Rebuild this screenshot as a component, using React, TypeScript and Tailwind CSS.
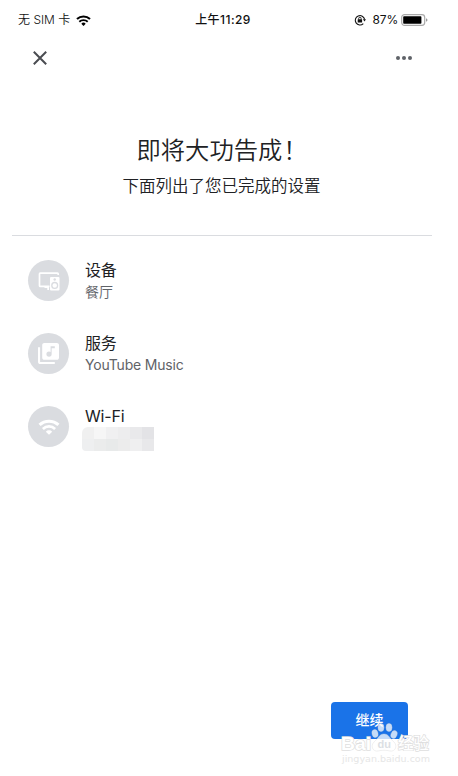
import type { ReactNode } from 'react';

interface RowProps {
  icon: ReactNode;
  title: string;
  children: ReactNode;
}

const mosaic = [
  'bg-[#f0f0f0]', 'bg-[#f6f6f6]', 'bg-[#f0f0f1]', 'bg-[#ededee]', 'bg-[#e9e9eb]', 'bg-[#e3e3e6]',
  'bg-[#eeeff0]', 'bg-[#ebecec]', 'bg-[#e8eaea]', 'bg-[#ececec]', 'bg-[#efeff0]', 'bg-[#e8e8ea]',
];

function WifiGlyph({ className }: { className: string }) {
  return (
    <svg viewBox="0 0 15 11" className={className} fill="none" stroke="currentColor">
      <path d="M1 4.1a9.4 9.4 0 0 1 13 0" strokeWidth="2.1" />
      <path d="M3.3 6.8a6.1 6.1 0 0 1 8.4 0" strokeWidth="1.9" />
      <path d="M7.5 10.9 5.3 8.7a3.1 3.1 0 0 1 4.4 0z" fill="currentColor" stroke="none" />
    </svg>
  );
}

function LockIcon() {
  return (
    <svg viewBox="0 0 12 12" className="h-3 w-3" fill="none" stroke="#111">
      <path d="M9.3 9.6A4.7 4.7 0 1 1 10.6 5.4" strokeWidth="1.1" />
      <path d="M8.9 5.2h3.1l-1.5 2.2z" fill="#111" stroke="none" />
      <rect x="3.7" y="5.2" width="4.4" height="3.4" rx=".4" fill="#111" stroke="none" />
      <path d="M4.7 5.4v-1a1.2 1.2 0 0 1 2.4 0v1" strokeWidth=".9" />
    </svg>
  );
}

function Battery() {
  return (
    <svg viewBox="0 0 27 12" className="h-3 w-[27px]">
      <rect x=".7" y=".6" width="23" height="10.8" rx="2.8" fill="#fff" stroke="#aaa" strokeWidth="1.2" />
      <rect x="2.2" y="2.2" width="18.2" height="7.6" rx=".8" fill="#000" />
      <path d="M25 4.2q1.5.5 1.5 1.8T25 7.8z" fill="#999" />
    </svg>
  );
}

function DeviceIcon() {
  return (
    <svg viewBox="0 0 22 20" className="h-5 w-[22px]" fill="none" stroke="#fff">
      <path d="M20.2 4V2.900q0-.7-.7-.7H2.200q-.7 0-.7.7v11.800q0 .7.7.7H11.500" strokeWidth="1.700" />
      <path d="M6.500 15h4.500v4H9.300v-2H6.500z" fill="#fff" stroke="none" />
      <rect x="12" y="6" width="9.500" height="13.500" rx="1" fill="#fff" stroke="none" />
      <circle cx="16.700" cy="8.500" r="1.200" fill="#dadce0" stroke="none" />
      <circle cx="16.700" cy="14.400" r="2.900" stroke="#dadce0" strokeWidth="1.300" />
    </svg>
  );
}

function MusicIcon() {
  return (
    <svg viewBox="2 2 20 20" className="h-[21px] w-[21px]" fill="#fff">
      <path d="M20 2H8c-1.100 0-2 .9-2 2v12c0 1.100.9 2 2 2h12c1.100 0 2-.9 2-2V4c0-1.100-.9-2-2-2zm-2 5h-3v5.500a2.500 2.500 0 0 1-2.500 2.500 2.500 2.500 0 0 1 0-5c.57 0 1.080.19 1.500.51V5h4v2zM4 6H2v14c0 1.100.9 2 2 2h14v-2H4V6z" />
    </svg>
  );
}

function Row({ icon, title, children }: RowProps) {
  return (
    <li className="flex h-[73px] gap-[17px]">
      <span className="mt-px flex h-[41px] w-[41px] shrink-0 items-center justify-center rounded-full bg-[#dadce0] text-white">
        {icon}
      </span>
      <div className="-ml-px">
        <p className="text-[16px] leading-[22px] tracking-[-0.2px] text-[#202124]">{title}</p>
        {children}
      </div>
    </li>
  );
}

function Watermark() {
  return (
    <svg viewBox="0 0 94 48" className="pointer-events-none absolute top-[721px] left-[338px] h-12 w-[94px]">
      <g fill="#fff" fillOpacity=".75" stroke="#d8d8d8" strokeWidth=".4">
        <ellipse cx="37" cy="12.500" rx="3" ry="4" transform="rotate(-15 37 12.500)" />
        <ellipse cx="43" cy="6.500" rx="3" ry="4" />
        <ellipse cx="51" cy="6.500" rx="3" ry="4" />
        <ellipse cx="56" cy="13.500" rx="3" ry="4" transform="rotate(20 56 13.500)" />
        <path d="M46 13c5 0 6 5 10 8 4 4 1 10-4 9-4-1-8-1-12 0-5 1-8-5-4-9 4-3 5-8 10-8z" />
      </g>
      <g fill="#fff" stroke="#dedede" strokeWidth="1.400" paintOrder="stroke">
        <text x="3" y="29" fontSize="18" textLength="30" lengthAdjust="spacingAndGlyphs" className="font-['Liberation_Sans',sans-serif] font-bold">Bai</text>
        <text x="39.500" y="27" fontSize="11" fill="#dcdfe4" stroke="none" className="font-['Liberation_Sans',sans-serif] font-bold">du</text>
        <text x="60" y="28" fontSize="15.500" textLength="31" className="font-['Noto_Sans_CJK_SC',sans-serif] font-medium">经验</text>
        <text x="4" y="40.500" fontSize="9.500" fill="#e6e6e6" stroke="none" textLength="88" lengthAdjust="spacingAndGlyphs" className="font-['DejaVu_Sans',sans-serif]">jingyan.baidu.com</text>
      </g>
    </svg>
  );
}

export default function App() {
  return (
    <div className="relative flex h-[776px] w-[458px] flex-col overflow-hidden bg-white font-[Inter,'Noto_Sans_CJK_SC',sans-serif] text-[#202124]">
      <div className="flex h-10 items-center pr-[30px] pl-[18px] text-[12px] text-[#111]">
        <div className="flex flex-1 items-center gap-[6px]">
          <span className="font-[350]">无 SIM 卡</span>
          <WifiGlyph className="h-[11px] w-[15px] text-black" />
        </div>
        <span className="font-medium tracking-[0.45px]">上午11:29</span>
        <div className="flex flex-1 items-center justify-end">
          <LockIcon />
          <span className="mr-[3px] ml-[7px] tracking-[-0.2px]">87%</span>
          <Battery />
        </div>
      </div>

      <header className="flex h-9 items-center justify-between pr-[46px] pl-[33px]">
        <button aria-label="关闭">
          <svg viewBox="0 0 14 14" className="h-3.5 w-3.5" stroke="#4a4c51" strokeWidth="2">
            <path d="m.8.8 12.400 12.400M13.200.8.8 13.200" />
          </svg>
        </button>
        <button aria-label="更多">
          <svg viewBox="0 0 16 4" className="h-1 w-4" fill="#5f6368">
            <circle cx="2" cy="2" r="2" />
            <circle cx="8" cy="2" r="2" />
            <circle cx="14" cy="2" r="2" />
          </svg>
        </button>
      </header>

      <main className="flex flex-1 flex-col pt-[56px]">
        <h1 className="ml-[136.500px] text-[24.300px] leading-9 font-[350]">
          即将大功告成<span className="ml-px">！</span>
        </h1>
        <p className="mt-[6px] ml-[122.500px] text-[16.500px] leading-6 font-[350]">下面列出了您已完成的设置</p>
        <hr className="mt-[37px] mr-[26px] ml-3 border-[#dadce0]" />

        <ul className="mt-[23px] pl-7">
          <Row icon={<DeviceIcon />} title="设备">
            <p className="text-[14px] leading-[22px] font-[350] text-[#5f6368]">餐厅</p>
          </Row>
          <Row icon={<MusicIcon />} title="服务">
            <p className="text-[14px] leading-[22px] tracking-[-0.2px] text-[#5f6368]">YouTube Music</p>
          </Row>
          <Row icon={<WifiGlyph className="h-4 w-[22px]" />} title="Wi-Fi">
            <div className="-ml-[3px] grid w-[72px] grid-cols-6 overflow-hidden rounded-tl-md rounded-bl-sm">
              {mosaic.map((tone, i) => (
                <span key={i} className={`h-3 ${tone}`} />
              ))}
            </div>
          </Row>
        </ul>
      </main>

      <footer className="flex justify-end pr-[50px] pb-[37px]">
        <button className="h-[37px] w-[77px] rounded-[4px] bg-[#1a73e8] pb-0.5 text-[14px] font-medium text-white">继续</button>
      </footer>
      <Watermark />
    </div>
  );
}
